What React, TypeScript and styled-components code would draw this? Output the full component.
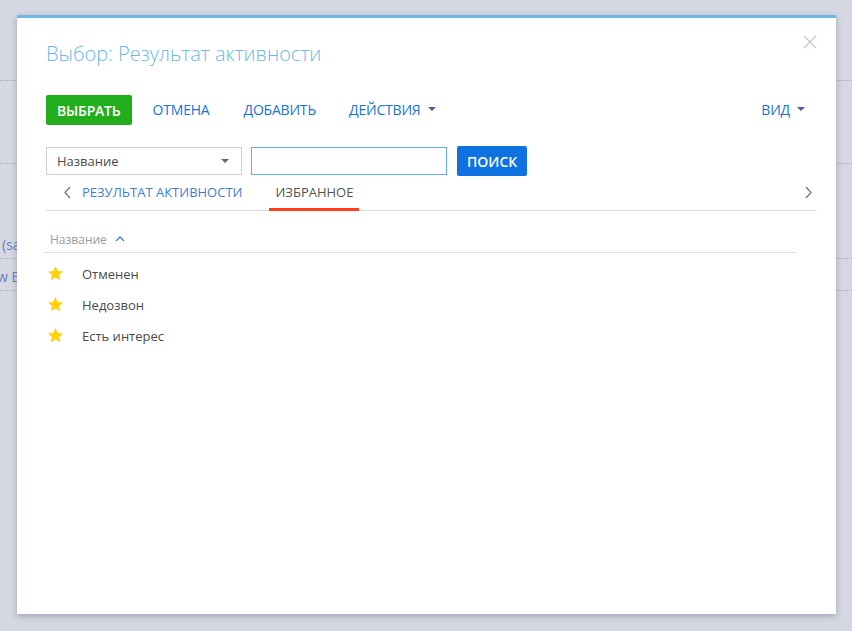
import React from "react";
import styled, { createGlobalStyle } from "styled-components";

const Global = createGlobalStyle`
  html, body { margin: 0; padding: 0; }
  body {
    width: 852px; height: 631px; overflow: hidden;
    background: #d5d7e2;
    font-family: "Open Sans", "Liberation Sans", sans-serif;
  }
`;

const Page = styled.div`
  position: relative;
  width: 852px;
  height: 631px;
  background: #d5d7e2;
  overflow: hidden;
`;

const BgList = styled.div`
  display: flex;
  flex-direction: column;
  padding-top: 80px;
`;

const BgRow = styled.div<{ $h: number }>`
  height: ${(p) => p.$h}px;
  border-top: 1px dotted #a9abb8;
  box-sizing: border-box;
  display: flex;
  align-items: flex-end;
  color: #6a7fc4;
  font-size: 14px;
  white-space: nowrap;
`;

const BgText = styled.span<{ $ml: number }>`
  margin-left: ${(p) => p.$ml}px;
  line-height: 1;
  padding-bottom: 6px;
`;

const Modal = styled.div`
  position: absolute;
  left: 17px;
  top: 15px;
  width: 819px;
  height: 599px;
  background: #fff;
  border-top: 3px solid #6cb8e0;
  box-sizing: border-box;
  box-shadow: 0 2px 6px rgba(60, 64, 90, 0.35);
  padding: 22px 19px 0 29px;
  display: flex;
  flex-direction: column;
`;

const Close = styled.button`
  position: absolute;
  right: 19px;
  top: 17px;
  width: 14px;
  height: 14px;
  padding: 0;
  border: 0;
  background: none;
  cursor: pointer;
`;

const Title = styled.h1`
  margin: 0;
  font-weight: 300;
  font-size: 20px;
  line-height: 28px;
  color: #6bb9e4;
`;

const Toolbar = styled.div`
  display: flex;
  align-items: center;
  margin-top: 27px;
  height: 30px;
`;

const Primary = styled.button<{ $bg: string }>`
  height: 30px;
  padding: 0 11px;
  border: 0;
  border-radius: 2px;
  background: ${(p) => p.$bg};
  color: #fff;
  font-family: inherit;
  font-size: 14px;
  font-weight: 600;
  letter-spacing: -0.2px;
`;

const LinkBtn = styled.button<{ $ml: number }>`
  margin-left: ${(p) => p.$ml}px;
  padding: 0 0 2px;
  border: 0;
  background: none;
  color: #1673d6;
  font-family: inherit;
  font-size: 14px;
  display: flex;
  align-items: center;
  gap: 7px;
  letter-spacing: -0.2px;
`;

const Caret = styled.span<{ $c?: string }>`
  width: 0;
  height: 0;
  border-left: 4px solid transparent;
  border-right: 4px solid transparent;
  border-top: 4px solid ${(p) => p.$c || "#4a5f94"};
`;

const Spacer = styled.div`
  flex: 1;
`;

const FilterRow = styled.div`
  display: flex;
  align-items: center;
  margin-top: 21px;
  gap: 9px;
`;

const Select = styled.div`
  width: 196px;
  height: 28px;
  box-sizing: border-box;
  border: 1px solid #cfcfcf;
  display: flex;
  align-items: center;
  justify-content: space-between;
  padding: 0 12px 0 10px;
  font-size: 13px;
  color: #4a4a4a;
`;

const Input = styled.input`
  width: 196px;
  height: 28px;
  box-sizing: border-box;
  border: 1px solid #5fb0ea;
  outline: none;
  padding: 0 8px;
`;

const Search = styled(Primary)`
  height: 30px;
  margin-left: 1px;
  padding: 0 10px;
  letter-spacing: 0;
`;

const Tabs = styled.div`
  display: flex;
  align-items: center;
  height: 35px;
  border-bottom: 1px solid #dcdcdc;
  box-sizing: border-box;
`;

const Arrow = styled.span<{ $ml: number; $mr?: number }>`
  margin-left: ${(p) => p.$ml}px;
  margin-right: ${(p) => p.$mr || 0}px;
  display: flex;
  align-items: center;
  padding-bottom: 2px;
`;

const Tab = styled.div<{ $active?: boolean; $ml: number }>`
  margin-left: ${(p) => p.$ml}px;
  height: 100%;
  display: flex;
  align-items: center;
  padding: 0 6px;
  box-sizing: border-box;
  font-size: 13px;
  color: ${(p) => (p.$active ? "#555" : "#3f7fd2")};
  border-bottom: 3px solid ${(p) => (p.$active ? "#ff3d1f" : "transparent")};
  margin-bottom: -1px;
`;

const Grid = styled.div`
  width: 752px;
  margin-top: 17px;
  margin-left: -2px;
`;

const Header = styled.div`
  height: 22px;
  border-bottom: 1px solid #e0e0e0;
  display: flex;
  align-items: center;
  gap: 8px;
  padding-left: 6px;
  padding-bottom: 2px;
  font-size: 12px;
  color: #9a9a9a;
`;

const Body = styled.div`
  padding-top: 5px;
`;

const Row = styled.div`
  height: 31px;
  display: flex;
  align-items: center;
  font-size: 13px;
  color: #4a4a4a;
`;

const StarCell = styled.span`
  width: 38px;
  display: flex;
  align-items: center;
  padding-left: 3px;
  box-sizing: border-box;
`;

const Star = () => (
  <svg width="17" height="17" viewBox="0 0 24 24">
    <path
      d="M12 1.5l3.1 7.1 7.6.6-5.8 5 1.8 7.5L12 17.7l-6.7 4 1.8-7.5-5.8-5 7.6-.6z"
      fill="#ffd10a"
    />
  </svg>
);

const Chevron = ({ dir, color }: { dir: "left" | "right" | "up"; color: string }) => {
  const d =
    dir === "left" ? "M7 1 L2 6.5 L7 12" : dir === "right" ? "M2 1 L7 6.5 L2 12" : "M1 6 L5 2 L9 6";
  const w = dir === "up" ? 10 : 9;
  const h = dir === "up" ? 8 : 13;
  return (
    <svg width={w} height={h} viewBox={`0 0 ${w} ${h}`}>
      <path d={d} fill="none" stroke={color} strokeWidth="1.3" />
    </svg>
  );
};

export default function App() {
  const rows = ["Отменен", "Недозвон", "Есть интерес"];
  return (
    <Page>
      <Global />
      <BgList>
        <BgRow $h={83} />
        <BgRow $h={95}>
          <BgText $ml={2}>(sa</BgText>
        </BgRow>
        <BgRow $h={32}>
          <BgText $ml={-3}>w B</BgText>
        </BgRow>
        <BgRow $h={40} />
      </BgList>
      <Modal>
        <Close aria-label="close">
          <svg width="14" height="14" viewBox="0 0 14 14">
            <path d="M1 1 L13 13 M13 1 L1 13" stroke="#c8c8c8" strokeWidth="1.2" />
          </svg>
        </Close>
        <Title>Выбор: Результат активности</Title>
        <Toolbar>
          <Primary $bg="#22ad1d">ВЫБРАТЬ</Primary>
          <LinkBtn $ml={21}>ОТМЕНА</LinkBtn>
          <LinkBtn $ml={34}>ДОБАВИТЬ</LinkBtn>
          <LinkBtn $ml={33}>
            ДЕЙСТВИЯ <Caret />
          </LinkBtn>
          <Spacer />
          <LinkBtn $ml={0} style={{ marginRight: 12 }}>
            ВИД <Caret />
          </LinkBtn>
        </Toolbar>
        <FilterRow>
          <Select>
            Название <Caret $c="#666" />
          </Select>
          <Input />
          <Search $bg="#0e72e0">ПОИСК</Search>
        </FilterRow>
        <Tabs>
          <Arrow $ml={17}>
            <Chevron dir="left" color="#777" />
          </Arrow>
          <Tab $ml={4}>РЕЗУЛЬТАТ АКТИВНОСТИ</Tab>
          <Tab $ml={21} $active>
            ИЗБРАННОЕ
          </Tab>
          <Spacer />
          <Arrow $ml={0} $mr={4}>
            <Chevron dir="right" color="#777" />
          </Arrow>
        </Tabs>
        <Grid>
          <Header>
            Название <Chevron dir="up" color="#3f7fd2" />
          </Header>
          <Body>
            {rows.map((r) => (
              <Row key={r}>
                <StarCell>
                  <Star />
                </StarCell>
                {r}
              </Row>
            ))}
          </Body>
        </Grid>
      </Modal>
    </Page>
  );
}
